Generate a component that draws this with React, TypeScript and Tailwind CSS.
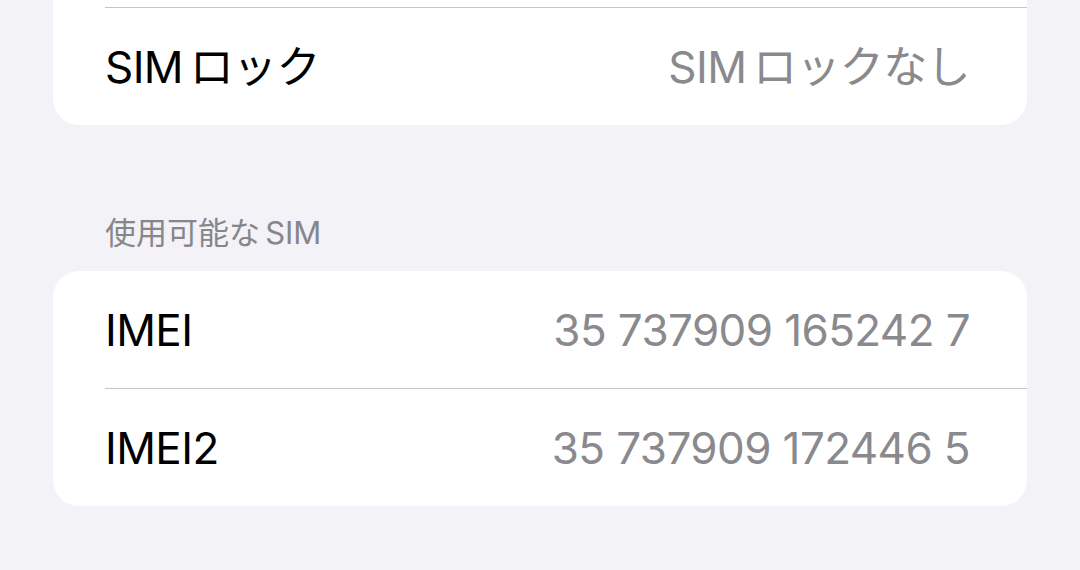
import React from "react";

type Row = { label: string; value: string };

// U+2006 gives the small gap the system font leaves between Latin and kana
const lockRows: Row[] = [{ label: "SIM\u2006ロック", value: "SIM\u2006ロックなし" }];

const simRows: Row[] = [
  { label: "IMEI", value: "35 737909 165242 7" },
  { label: "IMEI2", value: "35 737909 172446 5" },
];

const font = {
  fontFamily: '"Inter", "Noto Sans CJK JP", sans-serif',
};

const SettingsRow: React.FC<{ row: Row; divider: boolean }> = ({ row, divider }) => (
  <div>
    {divider && <div className="ml-[52px] h-px bg-[#c6c6c8]" />}
    <div className="flex h-[117px] items-center justify-between pl-[52px] pr-[57px] text-[44px] tracking-[-0.6px]">
      <span className="text-black">{row.label}</span>
      <span className="text-[#8a8a8e]">{row.value}</span>
    </div>
  </div>
);

const App: React.FC = () => {
  return (
    <div className="h-[570px] w-[1080px] overflow-hidden bg-[#f2f2f7] px-[53px]" style={font}>
      {/* tail end of the group scrolled above */}
      <div className="rounded-b-[26px] bg-white">
        <div className="h-[7px]" />
        {lockRows.map((row) => (
          <SettingsRow key={row.label} row={row} divider />
        ))}
      </div>

      <div className="pl-[52px] pt-[88px] pb-[18px] text-[31px] leading-[40px] text-[#86868b]">
        使用可能な{"\u2006"}SIM
      </div>

      <div className="overflow-hidden rounded-[26px] bg-white">
        {simRows.map((row, i) => (
          <SettingsRow key={row.label} row={row} divider={i > 0} />
        ))}
      </div>
    </div>
  );
};

export default App;
